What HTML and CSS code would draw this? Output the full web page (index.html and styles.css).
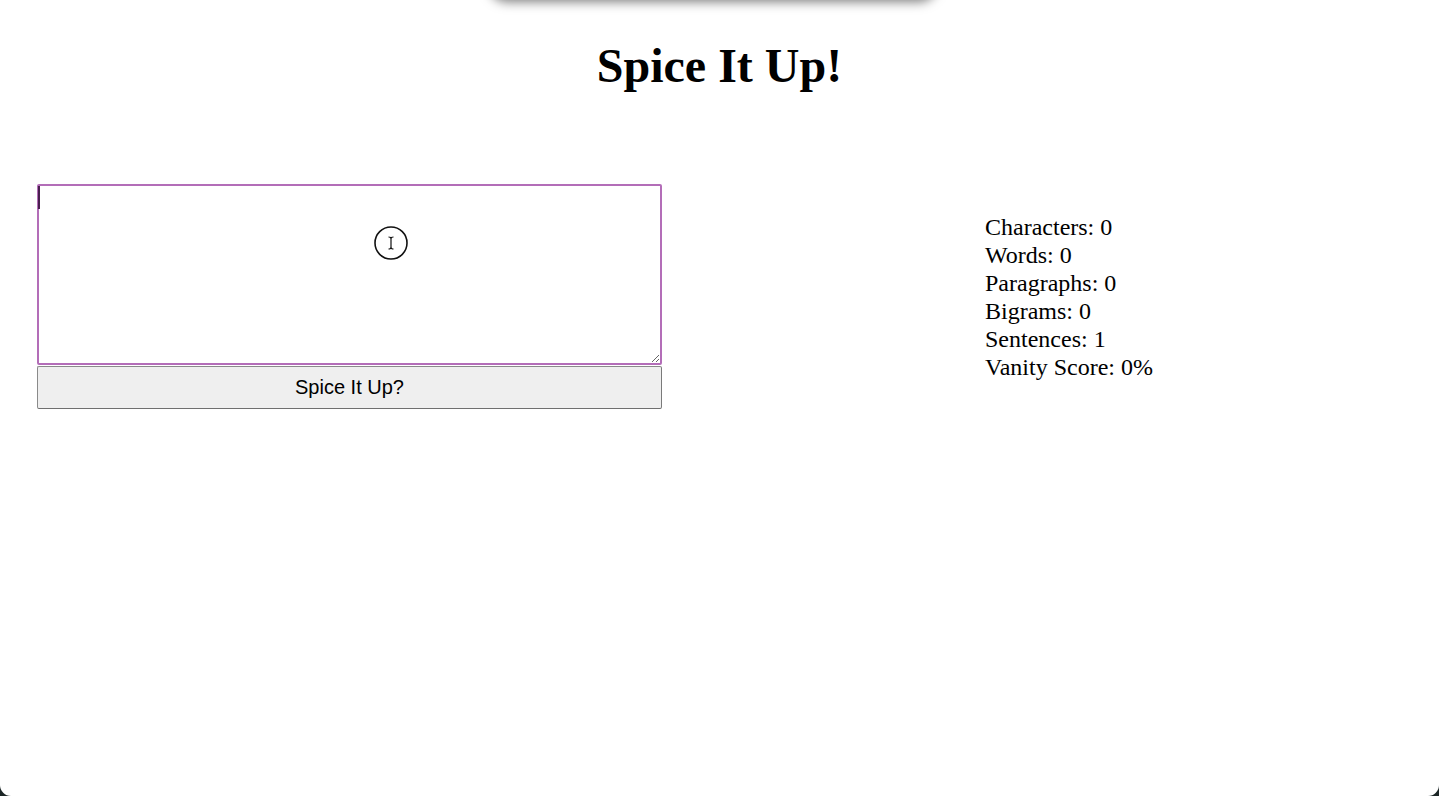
FILE: index.html
```html
<!DOCTYPE html>
<html lang="en">
<head>
<meta charset="utf-8">
<title>Spice It Up!</title>
<link rel="stylesheet" href="styles.css">
</head>
<body>
<div class="window">
  <div class="top-shadow"></div>
  <h1 class="title">Spice It Up!</h1>
  <main class="workspace">
    <section class="editor">
      <div class="field">
        <textarea class="input" aria-label="Text"></textarea>
        <span class="caret"></span>
        <svg class="cursor" width="36" height="36" viewBox="0 0 36 36" aria-hidden="true">
          <circle cx="18" cy="18" r="16" fill="#fff" stroke="#111" stroke-width="1.6"/>
          <path d="M15.5 12 Q18 12 18 13.8 Q18 12 20.5 12 M18 13.8 V22.2 M15.5 24 Q18 24 18 22.2 Q18 24 20.5 24" fill="none" stroke="#111" stroke-width="1.2"/>
        </svg>
      </div>
      <button class="spice-btn" type="button">Spice It Up?</button>
    </section>
    <section class="stats">
      <div class="stat">Characters: 0</div>
      <div class="stat">Words: 0</div>
      <div class="stat">Paragraphs: 0</div>
      <div class="stat">Bigrams: 0</div>
      <div class="stat">Sentences: 1</div>
      <div class="stat">Vanity Score: 0%</div>
    </section>
  </main>
</div>
</body>
</html>
```

FILE: styles.css
```css
html {
  background: #1c2626;
  height: 100%;
}
body {
  margin: 0;
  height: 100%;
  font-family: "Liberation Serif", "Times New Roman", serif;
  color: #000;
}
.window {
  position: relative;
  height: 100%;
  background: #fff;
  border-radius: 0 0 11px 11px;
  overflow: hidden;
}
.top-shadow {
  position: absolute;
  top: -40px;
  left: 488px;
  width: 450px;
  height: 40px;
  border-radius: 22px;
  background: #fff;
  box-shadow: 0 2px 11px rgba(0, 0, 0, 0.5);
}
.title {
  margin: 0;
  padding-top: 39px;
  font-size: 48px;
  font-weight: bold;
  line-height: 53px;
  text-align: center;
}
.workspace {
  display: flex;
  align-items: center;
  margin-top: 92px;
  padding-left: 37px;
}
.editor {
  display: flex;
  flex-direction: column;
  width: 625px;
}
.field {
  position: relative;
  display: flex;
}
.input {
  box-sizing: border-box;
  width: 625px;
  height: 181px;
  margin: 0;
  border: 2px solid #b36db8;
  border-radius: 2px;
  outline: none;
  resize: vertical;
  background: #fff;
  font-family: "Liberation Mono", monospace;
  font-size: 13px;
}
.caret {
  position: absolute;
  left: 1px;
  top: 2px;
  width: 2px;
  height: 23px;
  background: #4a1f50;
}
.cursor {
  position: absolute;
  left: 336px;
  top: 41px;
}
.spice-btn {
  box-sizing: border-box;
  width: 625px;
  height: 43px;
  margin: 1px 0 0;
  background: #efefef;
  border: 1px solid #8a8a8a;
  border-bottom-color: #6f6f6f;
  border-right-color: #7a7a7a;
  border-radius: 2px;
  font-family: "Liberation Sans", Arial, sans-serif;
  font-size: 20px;
  color: #000;
  padding: 0;
}
.stats {
  margin-left: 323px;
  font-size: 24px;
  line-height: 28px;
}
```
